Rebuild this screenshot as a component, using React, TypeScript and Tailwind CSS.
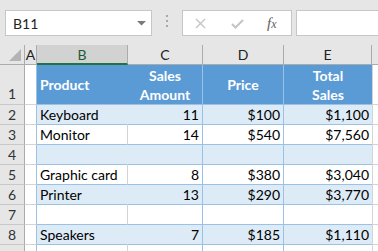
import { Fragment } from "react";

const FONT = { fontFamily: "Lato, 'Open Sans', 'Liberation Sans', sans-serif" };

type Row = { n: number; product: string; amount: string; price: string; total: string };

const rows: Row[] = [
  { n: 2, product: "Keyboard", amount: "11", price: "$100", total: "$1,100" },
  { n: 3, product: "Monitor", amount: "14", price: "$540", total: "$7,560" },
  { n: 4, product: "", amount: "", price: "", total: "" },
  { n: 5, product: "Graphic card", amount: "8", price: "$380", total: "$3,040" },
  { n: 6, product: "Printer", amount: "13", price: "$290", total: "$3,770" },
  { n: 7, product: "", amount: "", price: "", total: "" },
  { n: 8, product: "Speakers", amount: "7", price: "$185", total: "$1,110" },
  { n: 9, product: "", amount: "", price: "", total: "" },
];

function FormulaBar() {
  return (
    <div className="flex h-[45px] items-start bg-[#e6e6e6] pl-[5px] pt-[10px]">
      <div className="flex h-[26px] w-[147px] items-center justify-between border border-[#c6c6c6] bg-white pl-[7px] pr-[5px] text-[14px] text-[#222]">
        <span>B11</span>
        <svg width="9" height="5" viewBox="0 0 9 5">
          <path d="M0 0h9L4.5 4.5z" fill="#7a7a7a" />
        </svg>
      </div>
      <div className="flex w-[30px] flex-col items-center gap-[3px] pt-[5px]">
        <span className="h-[2px] w-[2px] bg-[#a8a8a8]" />
        <span className="h-[2px] w-[2px] bg-[#a8a8a8]" />
        <span className="h-[2px] w-[2px] bg-[#a8a8a8]" />
      </div>
      <div className="flex h-[26px] w-[110px] items-center border border-[#c6c6c6] bg-white">
        <svg className="ml-[12px]" width="11" height="11" viewBox="0 0 11 11">
          <path d="M1 1l9 9M10 1l-9 9" stroke="#c4c4c4" strokeWidth="1.4" />
        </svg>
        <svg className="ml-[25px]" width="13" height="11" viewBox="0 0 13 11">
          <path d="M1 6l3.5 3.5L12 2" stroke="#c4c4c4" strokeWidth="2" fill="none" />
        </svg>
        <span
          className="ml-[23px] text-[15px] italic text-[#5e5e5e]"
          style={{ fontFamily: "'Liberation Serif', serif" }}
        >
          f<span className="text-[12px]">x</span>
        </span>
      </div>
      <div className="ml-[4px] h-[26px] flex-1 border border-r-0 border-[#c6c6c6] bg-white" />
    </div>
  );
}

function ColumnHeaders() {
  const cols = [
    { l: "A", w: "w-[12px]" },
    { l: "B", w: "w-[91px]" },
    { l: "C", w: "w-[75px]" },
    { l: "D", w: "w-[81px]" },
    { l: "E", w: "w-[88px]" },
  ];
  return (
    <div className="flex h-[20px] bg-[#e6e6e6] text-[14px]">
      <div className="relative w-[25px] border-b border-r border-[#ababab]">
        <svg className="absolute bottom-[3px] right-[3px]" width="12" height="12" viewBox="0 0 12 12">
          <path d="M12 0v12H0z" fill="#b4b4b4" />
        </svg>
      </div>
      {cols.map((c) =>
        c.l === "B" ? (
          <div
            key={c.l}
            className={`${c.w} flex items-center justify-center border-b-2 border-r border-b-[#217346] border-r-[#ababab] bg-[#d2d2d2] pt-[1px] text-[#1f5a36]`}
          >
            {c.l}
          </div>
        ) : (
          <div
            key={c.l}
            className={`${c.w} flex items-center justify-center border-b border-r border-[#ababab] text-[#222]`}
          >
            {c.l}
          </div>
        )
      )}
      <div className="flex-1 border-b border-[#ababab]" />
    </div>
  );
}

function RowHead({ n, tall }: { n?: number; tall?: boolean }) {
  return (
    <div
      className={`flex w-[25px] justify-center border-b border-r border-[#c8c8c8] border-r-[#ababab] bg-[#e6e6e6] text-[14px] text-[#333] ${
        tall ? "h-[40px] items-end" : "h-[20px] items-center"
      }`}
    >
      {n}
    </div>
  );
}

export default function App() {
  return (
    <div className="h-[251px] w-[378px] overflow-hidden bg-white" style={FONT}>
      <FormulaBar />
      <ColumnHeaders />
      {/* table header row */}
      <div className="flex h-[40px]">
        <RowHead n={1} tall />
        <div className="w-[12px] border-b border-r border-[#d4d4d4] border-r-[#9bc2e6]" />
        <div className="flex w-[91px] items-center border-b border-[#9bc2e6] bg-[#5b9bd5] pl-[3px] text-[14px] font-bold text-white">
          Product
        </div>
        <div className="flex w-[75px] flex-col items-center justify-center border-b border-r border-[#9bc2e6] bg-[#5b9bd5] text-[14px] font-bold leading-[19px] text-white">
          <span>Sales</span>
          <span>Amount</span>
        </div>
        <div className="flex w-[81px] items-center justify-center border-b border-r border-[#9bc2e6] bg-[#5b9bd5] text-[14px] font-bold text-white">
          Price
        </div>
        <div className="flex w-[88px] flex-col items-center justify-center border-b border-[#9bc2e6] bg-[#5b9bd5] text-[14px] font-bold leading-[19px] text-white">
          <span>Total</span>
          <span>Sales</span>
        </div>
        <div className="flex-1 border-b border-l border-[#d4d4d4]" />
      </div>
      {rows.map((r) => {
        const band = r.n % 2 === 0;
        const bg = band ? "bg-[#ddebf7]" : "bg-white";
        return (
          <Fragment key={r.n}>
            <div className="flex h-[20px] text-[14px] text-black">
              {/* row 9 is cut off at the bottom edge, its number is not visible */}
              <RowHead n={r.n < 9 ? r.n : undefined} />
              <div className="w-[12px] border-b border-r border-[#d4d4d4] border-r-[#9bc2e6]" />
              <div
                className={`flex w-[91px] items-center border-b border-r border-b-[#9bc2e6] pl-[3px] ${bg} ${
                  band ? "border-r-[#ddebf7]" : "border-r-[#d4d4d4]"
                }`}
              >
                {r.product}
              </div>
              <div className={`flex w-[75px] items-center justify-end border-b border-r border-[#9bc2e6] pr-[3px] ${bg}`}>
                {r.amount}
              </div>
              <div className={`flex w-[81px] items-center justify-end border-b border-r border-[#9bc2e6] pr-[3px] ${bg}`}>
                {r.price}
              </div>
              <div className={`flex w-[88px] items-center justify-end border-b border-[#9bc2e6] pr-[3px] ${bg}`}>
                {r.total}
              </div>
              <div className="flex-1 border-b border-l border-[#d4d4d4]" />
            </div>
          </Fragment>
        );
      })}
    </div>
  );
}
